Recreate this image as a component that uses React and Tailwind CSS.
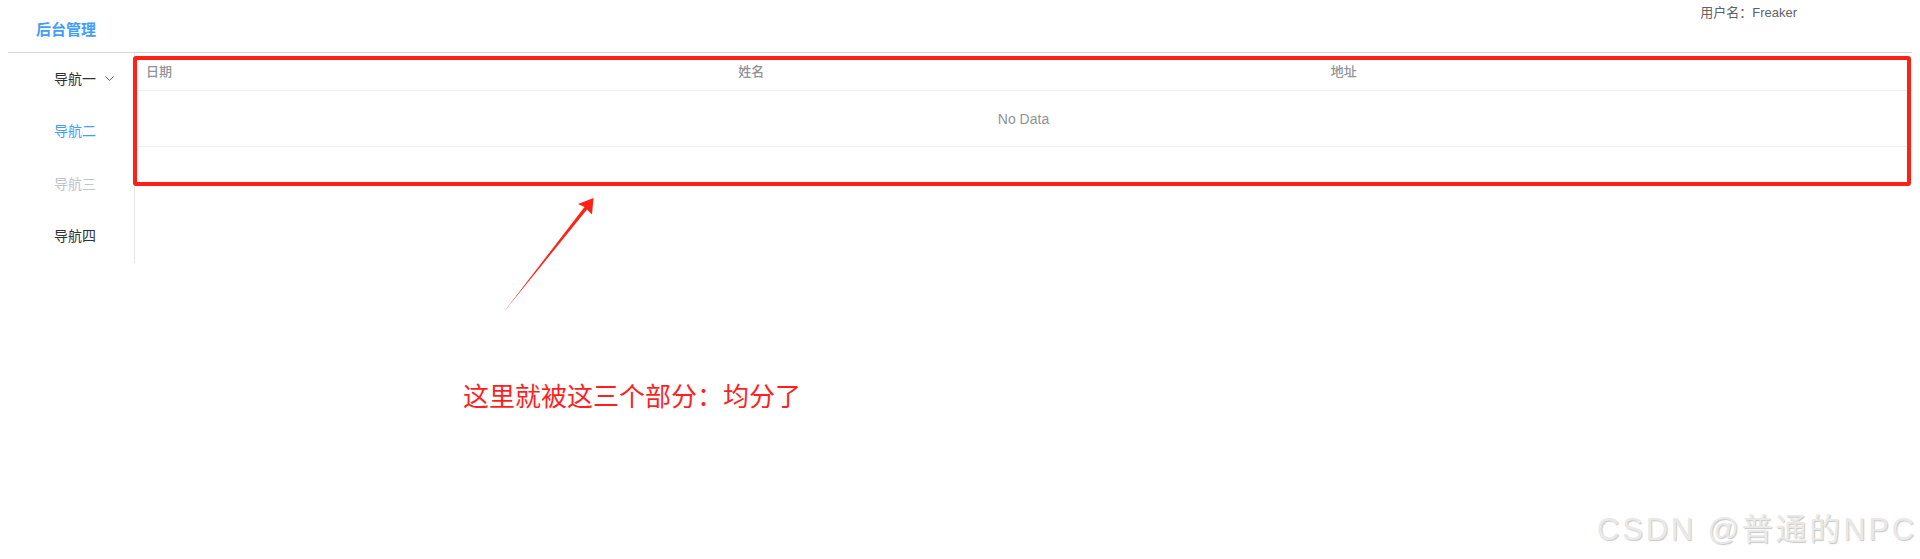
export default function App() {
  const navItems = [
    { label: '导航一', color: 'text-[#303133]', submenu: true },
    { label: '导航二', color: 'text-[#409eff]' },
    { label: '导航三', color: 'text-[#c0c4cc]' },
    { label: '导航四', color: 'text-[#303133]' },
  ]

  return (
    <div className="relative h-[559px] w-full overflow-hidden bg-white font-['Liberation_Sans','Noto_Sans_CJK_SC',sans-serif]">
      <div className="px-2">
        <header className="flex h-[53px] border-b border-[#d6d6d6]">
          <div className="mt-[20px] pl-[28px] text-[15px] font-bold leading-[20px] text-[#409eff]">后台管理</div>
          <div className="ml-auto mr-[115px] mt-[4px] text-[13px] leading-[18px] text-[#606266]">用户名：Freaker</div>
        </header>

        <div className="flex">
          <aside className="h-[210px] w-[127px] shrink-0 border-r border-[#e6e6e6]">
            <ul>
              {navItems.map((item) => (
                <li
                  key={item.label}
                  className={`flex h-[52.5px] items-center pl-[46px] pr-[20px] text-[14px] ${item.color}`}
                >
                  <span>{item.label}</span>
                  {item.submenu && (
                    <svg className="ml-auto" width="9" height="6" viewBox="0 0 9 6" fill="none">
                      <path d="M0.5 0.5 L4.5 4.5 L8.5 0.5" stroke="#606266" strokeWidth="1" />
                    </svg>
                  )}
                </li>
              ))}
            </ul>
          </aside>

          <main className="min-w-0 flex-1">
            <div className="grid h-[38px] grid-cols-3 items-center border-b border-[#ebeef5] text-[13px] font-medium text-[#909399]">
              <div className="pl-[11px]">日期</div>
              <div className="pl-[11px]">姓名</div>
              <div className="pl-[11px]">地址</div>
            </div>
            <div className="flex h-[56px] items-center justify-center border-b border-[#ebeef5] pt-[1px] text-[14px] text-[#909399]">
              No Data
            </div>
          </main>
        </div>
      </div>

      {/* annotation overlay */}
      <div className="pointer-events-none absolute left-[133px] top-[56px] h-[130px] w-[1778px] rounded-[3px] border-4 border-[#ff2116]" />
      <svg className="pointer-events-none absolute inset-0" width="1920" height="559" viewBox="0 0 1920 559">
        <polygon
          points="503,313 587,209.5 592,214.5 593.5,198 578,204 584.5,207"
          fill="#ff2116"
        />
      </svg>
      <div className="absolute left-[463px] top-[382px] font-['Noto_Sans_CJK_SC',sans-serif] text-[26px] leading-none text-[#ff1f1f]">
        这里就被这三个部分：均分了
      </div>

      <div className="absolute right-[3px] top-[514px] text-[31px] leading-none tracking-[2.8px] text-[#e9e9e9] [text-shadow:1px_1px_1px_rgba(0,0,0,0.22)]">
        CSDN @普通的NPC
      </div>
    </div>
  )
}
